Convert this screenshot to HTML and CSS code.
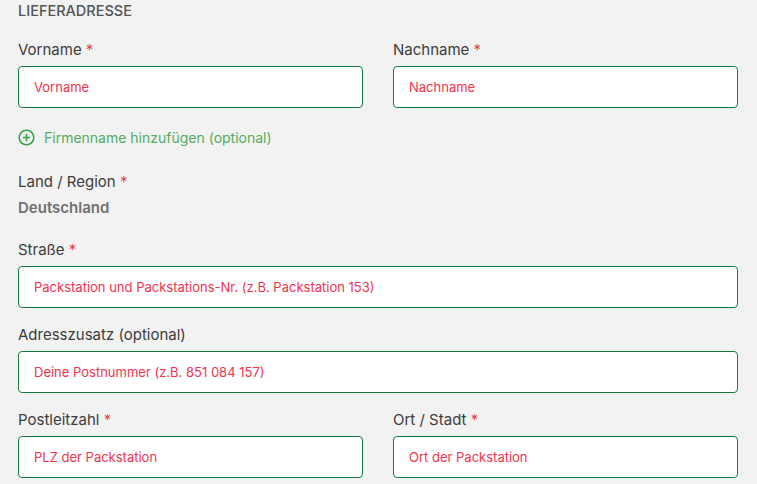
FILE: index.html
```html
<!DOCTYPE html>
<html lang="de">
<head>
	<meta charset="UTF-8">
	<title>Lieferadresse</title>
	<link rel="stylesheet" href="styles.css">
</head>
<body>
	<div class="ct">
		<h2 class="title">Lieferadresse</h2>
		<div class="row">
			<div class="field">
				<label class="label">Vorname <i>*</i></label>
				<input class="input" type="text" placeholder="Vorname">
			</div>
			<div class="field">
				<label class="label">Nachname <i>*</i></label>
				<input class="input" type="text" placeholder="Nachname">
			</div>
		</div>
		<a class="add-link" href="#">
			<svg width="17" height="17" viewBox="0 0 17 17">
				<circle cx="8.5" cy="8.5" r="7.3" fill="none" stroke="#3aa14a" stroke-width="1.6"/>
				<path d="M8.5 4.8v7.4M4.8 8.5h7.4" stroke="#3aa14a" stroke-width="1.6"/>
			</svg>
			Firmenname hinzufügen (optional)
		</a>
		<div class="field country">
			<label class="label">Land / Region <i>*</i></label>
			<div class="value">Deutschland</div>
		</div>
		<div class="field">
			<label class="label">Straße <i>*</i></label>
			<input class="input" type="text" placeholder="Packstation und Packstations-Nr. (z.B. Packstation 153)">
		</div>
		<div class="field">
			<label class="label">Adresszusatz (optional)</label>
			<input class="input" type="text" placeholder="Deine Postnummer (z.B. 851 084 157)">
		</div>
		<div class="row">
			<div class="field">
				<label class="label">Postleitzahl <i>*</i></label>
				<input class="input" type="text" placeholder="PLZ der Packstation">
			</div>
			<div class="field">
				<label class="label">Ort / Stadt <i>*</i></label>
				<input class="input" type="text" placeholder="Ort der Packstation">
			</div>
		</div>
	</div>
</body>
</html>
```

FILE: styles.css
```css
html,body,div,h2,label,input,a {
	margin: 0;
	padding: 0;
}
body {
	background-color: #f2f2f2;
	font-family: "Inter", "Noto Sans", sans-serif;
	color: #3c3c3c;
}
.ct {
	width: 720px;
	padding: 0 18px;
}
.title {
	font-size: 14.5px;
	font-weight: 500;
	line-height: 22px;
	text-transform: uppercase;
	color: #555;
	margin-bottom: 18px;
}
.row {
	display: flex;
	gap: 30px;
	margin-bottom: 19px;
}
.row .field {
	flex: 1;
	margin-bottom: 0;
}
.field {
	display: flex;
	flex-direction: column;
	margin-bottom: 17px;
}
.label {
	font-size: 15px;
	line-height: 20px;
	margin-bottom: 6px;
	color: #3c3c3c;
}
.label i {
	font-style: normal;
	color: #e0474c;
}
.input {
	height: 42px;
	box-sizing: border-box;
	border: 1px solid #137a42;
	border-radius: 4px;
	background-color: #fff;
	padding: 0 15px;
	font-family: inherit;
	font-size: 13px;
	outline: none;
}
.input::placeholder {
	color: #f0344f;
	opacity: 1;
}
.add-link {
	display: flex;
	align-items: center;
	gap: 9px;
	height: 20px;
	margin: 3px 0 25px;
	font-size: 14px;
	color: #52ad5f;
	text-decoration: none;
}
.country .value {
	font-size: 15px;
	font-weight: 600;
	line-height: 20px;
	color: #707070;
}
.country {
	margin-bottom: 22px;
}
```
